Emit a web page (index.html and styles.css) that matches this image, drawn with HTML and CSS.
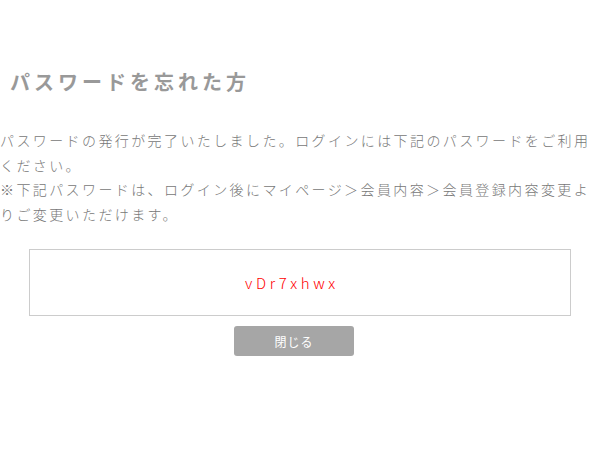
FILE: index.html
```html
<!DOCTYPE html>
<html>
<head>
<meta charset="utf-8">
<title>パスワードを忘れた方</title>
<link rel="stylesheet" href="styles.css">
</head>
<body>
<div class="container">
  <h1 class="page-title">パスワードを忘れた方</h1>
  <p class="message">パスワードの発行が完了いたしました。ログインには下記のパスワードをご利用ください。<br>※下記パスワードは、ログイン後にマイページ＞会員内容＞会員登録内容変更よりご変更いただけます。</p>
  <div class="password-box">
    <span class="password">vDr7xhwx</span>
  </div>
  <div class="actions">
    <button class="close-btn" onclick="window.close()">閉じる</button>
  </div>
</div>
</body>
</html>
```

FILE: styles.css
```css
body {
  margin: 0;
  background: #fff;
  font-family: "Noto Sans CJK JP", "Noto Sans", sans-serif;
  color: #777;
}
.container {
  width: 598px;
  padding-top: 67px;
}
.page-title {
  margin: 0 0 0 10px;
  font-size: 20px;
  line-height: 30px;
  letter-spacing: 4px;
  font-weight: bold;
  color: #999;
}
.message {
  margin: 31px 0 0;
  font-size: 14px;
  line-height: 24.5px;
  letter-spacing: 2.4px;
  font-weight: 300;
}
.password-box {
  margin: 23px 27px 0 29px;
  height: 65px;
  padding-right: 16px;
  border: 1px solid #ccc;
  display: flex;
  justify-content: center;
  align-items: center;
}
.password {
  color: #f00;
  font-size: 15px;
  font-weight: 300;
  letter-spacing: 3.6px;
}
.actions {
  display: flex;
  justify-content: center;
  padding-right: 10px;
  margin-top: 10px;
}
.close-btn {
  width: 120px;
  height: 30px;
  border: none;
  border-radius: 3px;
  background: #a6a6a6;
  color: #fff;
  font-family: inherit;
  font-size: 12px;
  letter-spacing: 1px;
  cursor: pointer;
}
```
